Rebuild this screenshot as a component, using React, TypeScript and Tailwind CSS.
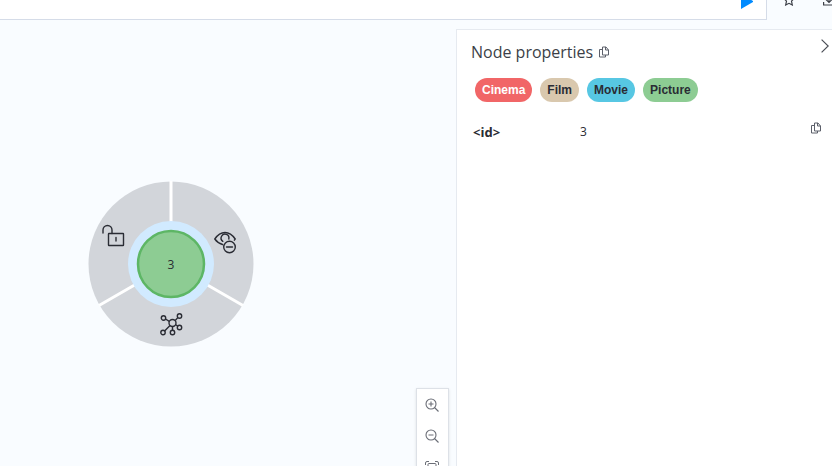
import type { ReactNode } from 'react'
import clsx from 'clsx'

const LABELS = [
  { name: 'Cinema', className: 'bg-[#f16667] text-white' },
  { name: 'Film', className: 'bg-[#d9c8ae] text-[#2a2c34]' },
  { name: 'Movie', className: 'bg-[#57c7e3] text-[#2a2c34]' },
  { name: 'Picture', className: 'bg-[#8dcc93] text-[#2a2c34]' },
]

const PROPERTIES = [{ key: '<id>', value: '3' }]

function CopyIcon() {
  return (
    <svg width="10" height="12" viewBox="0 0 10 12" fill="none" stroke="currentColor">
      <path d="M3.5 1H7l2.500 3v5h-6z" />
      <path d="M6.500 1v3h3" />
      <path d="M3.500 3.500h-3v7.500h6V9" />
    </svg>
  )
}

function StarIcon() {
  return (
    <svg width="12" height="12" viewBox="0 0 12 12" fill="none" stroke="currentColor" strokeWidth="1.2">
      <path d="M6 1l1.500 3.300 3.500.300-2.500 2.600.800 3.800L6 9.300 2.700 11l.800-3.800L1 4.600l3.500-.300z" />
    </svg>
  )
}

function DownloadIcon() {
  return (
    <svg width="12" height="12" viewBox="0 0 12 12" fill="none" stroke="currentColor" strokeWidth="1.2">
      <path d="M6 0v8M3 5.500l3 3 3-3M.6 8v3h10.800V8" />
    </svg>
  )
}

function PlayIcon() {
  return (
    <svg width="13" height="16" viewBox="0 0 13 16" fill="currentColor">
      <path d="M1 0l12 7v1L1 15z" />
    </svg>
  )
}

function ChevronIcon() {
  return (
    <svg width="8" height="14" viewBox="0 0 8 14" fill="none" stroke="currentColor" strokeWidth="1.2">
      <path d="M.6.6L7.200 7 .6 13.400" />
    </svg>
  )
}

function UnlockIcon() {
  return (
    <svg width="24" height="24" viewBox="0 0 24 24" fill="none" stroke="currentColor" strokeWidth="1.4">
      <rect x="6.500" y="9.500" width="15" height="12" rx=".5" />
      <path d="M1 9V6a4.500 4.500 0 0 1 9 0v3.500M14 13.500v3.500" strokeLinecap="round" />
    </svg>
  )
}

function HideIcon() {
  return (
    <svg width="24" height="24" viewBox="0 0 24 24" fill="none" stroke="currentColor" strokeWidth="1.4" strokeLinecap="round">
      <path d="M8.500 13.500C5 12.500 2.500 10.500.8 8 3.500 4 6.800 1.500 11 1.500S18.500 4 21.200 8l-.800 1.200" />
      <path d="M8.800 10.300a3.900 3.900 0 1 1 6-2.300" />
      <circle cx="15.500" cy="16" r="5.800" />
      <path d="M12.500 16h6" />
    </svg>
  )
}

function ExpandIcon() {
  return (
    <svg width="24" height="24" viewBox="0 0 24 24" fill="none" stroke="currentColor" strokeWidth="1.4">
      <circle cx="12.500" cy="11" r="3.500" />
      <circle cx="3.500" cy="6" r="2.200" />
      <circle cx="19.500" cy="4" r="2.200" />
      <circle cx="19.500" cy="15.500" r="2.200" />
      <circle cx="12.500" cy="20.500" r="2.200" />
      <circle cx="3" cy="20.500" r="2.200" />
      <path d="M5.500 7l3.800 2.300M15.200 8.500l2.600-2.900M15.800 12.700l1.800 1.300M12.500 14.600v3.700M10 13.500l-5.400 5.400" />
    </svg>
  )
}

function ZoomIcon({ plus }: { plus?: boolean }) {
  return (
    <svg width="14" height="14" viewBox="0 0 14 14" fill="none" stroke="currentColor" strokeWidth="1.1">
      <circle cx="6" cy="6" r="5" />
      <path d="M9.500 9.500l4 4M3.500 6h5" />
      {plus && <path d="M6 3.500v5" />}
    </svg>
  )
}

function FitIcon() {
  return (
    <svg width="14" height="12" viewBox="0 0 14 12" fill="none" stroke="currentColor">
      <path d="M4 .5H2a1.500 1.500 0 0 0-1.500 1.500V4M10 .5h2A1.500 1.500 0 0 1 13.500 2V4M.5 8v2A1.500 1.500 0 0 0 2 11.500h2M13.500 8v2a1.500 1.500 0 0 1-1.500 1.500h-2" />
      <rect x="3" y="2.500" width="8" height="7" rx="1" />
    </svg>
  )
}

interface IconButtonProps {
  label: string
  className?: string
  children: ReactNode
}

function IconButton({ label, className, children }: IconButtonProps) {
  return (
    <button
      type="button"
      aria-label={label}
      className={clsx('flex shrink-0 items-center justify-center', className)}
    >
      {children}
    </button>
  )
}

function TopBar() {
  return (
    <header className="-mt-4 flex h-9 shrink-0">
      <div className="flex flex-1 items-center justify-end border-r border-b border-[#d5dce8] bg-white pr-[13px]">
        <IconButton label="Run" className="text-[#018bff]">
          <PlayIcon />
        </IconButton>
      </div>
      <div className="flex w-[65px] shrink-0 gap-7 overflow-hidden pb-1 pl-4 text-[#3c3f47]">
        <IconButton label="Save as favorite">
          <StarIcon />
        </IconButton>
        <IconButton label="Download">
          <DownloadIcon />
        </IconButton>
      </div>
    </header>
  )
}

function NodeRing() {
  return (
    <div className="absolute top-[152px] left-[88px] size-[166px] text-[#2a2c34]">
      <svg width="166" height="166" viewBox="-83 -83 166 166">
        <circle r="82.500" fill="#d2d5da" />
        <path d="M0 0V-83M0 0L-72 41.500M0 0L72 41.500" stroke="#fff" strokeWidth="3" />
        <circle r="43" fill="#d1eaff" />
        <circle r="33" fill="#8dcc93" stroke="#5db665" strokeWidth="2.500" />
        <text y="5" textAnchor="middle" fontSize="12" fill="#2a2c34">
          3
        </text>
      </svg>
      <IconButton label="Unlock" className="absolute top-[43px] left-[14px]">
        <UnlockIcon />
      </IconButton>
      <IconButton label="Hide" className="absolute top-[50px] left-[126px]">
        <HideIcon />
      </IconButton>
      <IconButton label="Expand" className="absolute top-[131px] left-[72px]">
        <ExpandIcon />
      </IconButton>
    </div>
  )
}

function ZoomControls() {
  return (
    <div className="absolute right-[7px] -bottom-[17px] w-[33px] border border-[#dde1e7] bg-white pr-px text-[#6a6d76] shadow-sm">
      <IconButton label="Zoom in" className="h-[31px] w-full">
        <ZoomIcon plus />
      </IconButton>
      <IconButton label="Zoom out" className="h-[31px] w-full">
        <ZoomIcon />
      </IconButton>
      <IconButton label="Zoom to fit" className="h-[31px] w-full">
        <FitIcon />
      </IconButton>
    </div>
  )
}

function NodeProperties() {
  return (
    <aside className="w-[376px] shrink-0 border-t border-l border-[#e6eaf0] bg-white pl-[14px] text-[#3c3f47]">
      <div className="flex items-center pt-2">
        <h2 className="text-base leading-7">Node properties</h2>
        <IconButton label="Copy all" className="ml-1.5 text-[#5c606b]">
          <CopyIcon />
        </IconButton>
        <IconButton label="Collapse" className="mr-[3px] mb-3 ml-auto text-[#4a4d55]">
          <ChevronIcon />
        </IconButton>
      </div>
      <div className="mt-3 ml-1 flex gap-2">
        {LABELS.map((label) => (
          <button
            key={label.name}
            type="button"
            className={clsx(
              'h-6 rounded-full px-[7px] font-["Liberation_Sans",sans-serif] text-xs font-bold',
              label.className,
            )}
          >
            {label.name}
          </button>
        ))}
      </div>
      <table className="mt-5 w-full table-fixed text-left text-xs leading-5 text-[#2a2c34]">
        <tbody>
          {PROPERTIES.map((property) => (
            <tr key={property.key}>
              <th className="w-[109px] pl-0.5 text-[13px] font-bold">{property.key}</th>
              <td>{property.value}</td>
              <td className="w-[21px] align-top">
                <IconButton label="Copy value" className="text-[#5c606b]">
                  <CopyIcon />
                </IconButton>
              </td>
            </tr>
          ))}
        </tbody>
      </table>
    </aside>
  )
}

export default function App() {
  return (
    <div className='flex h-screen flex-col overflow-hidden bg-[#f9fcff] font-["Open_Sans",sans-serif]'>
      <TopBar />
      <main className="mt-[9px] flex min-h-0 flex-1">
        <section className="relative min-w-0 flex-1 overflow-hidden">
          <NodeRing />
          <ZoomControls />
        </section>
        <NodeProperties />
      </main>
    </div>
  )
}
